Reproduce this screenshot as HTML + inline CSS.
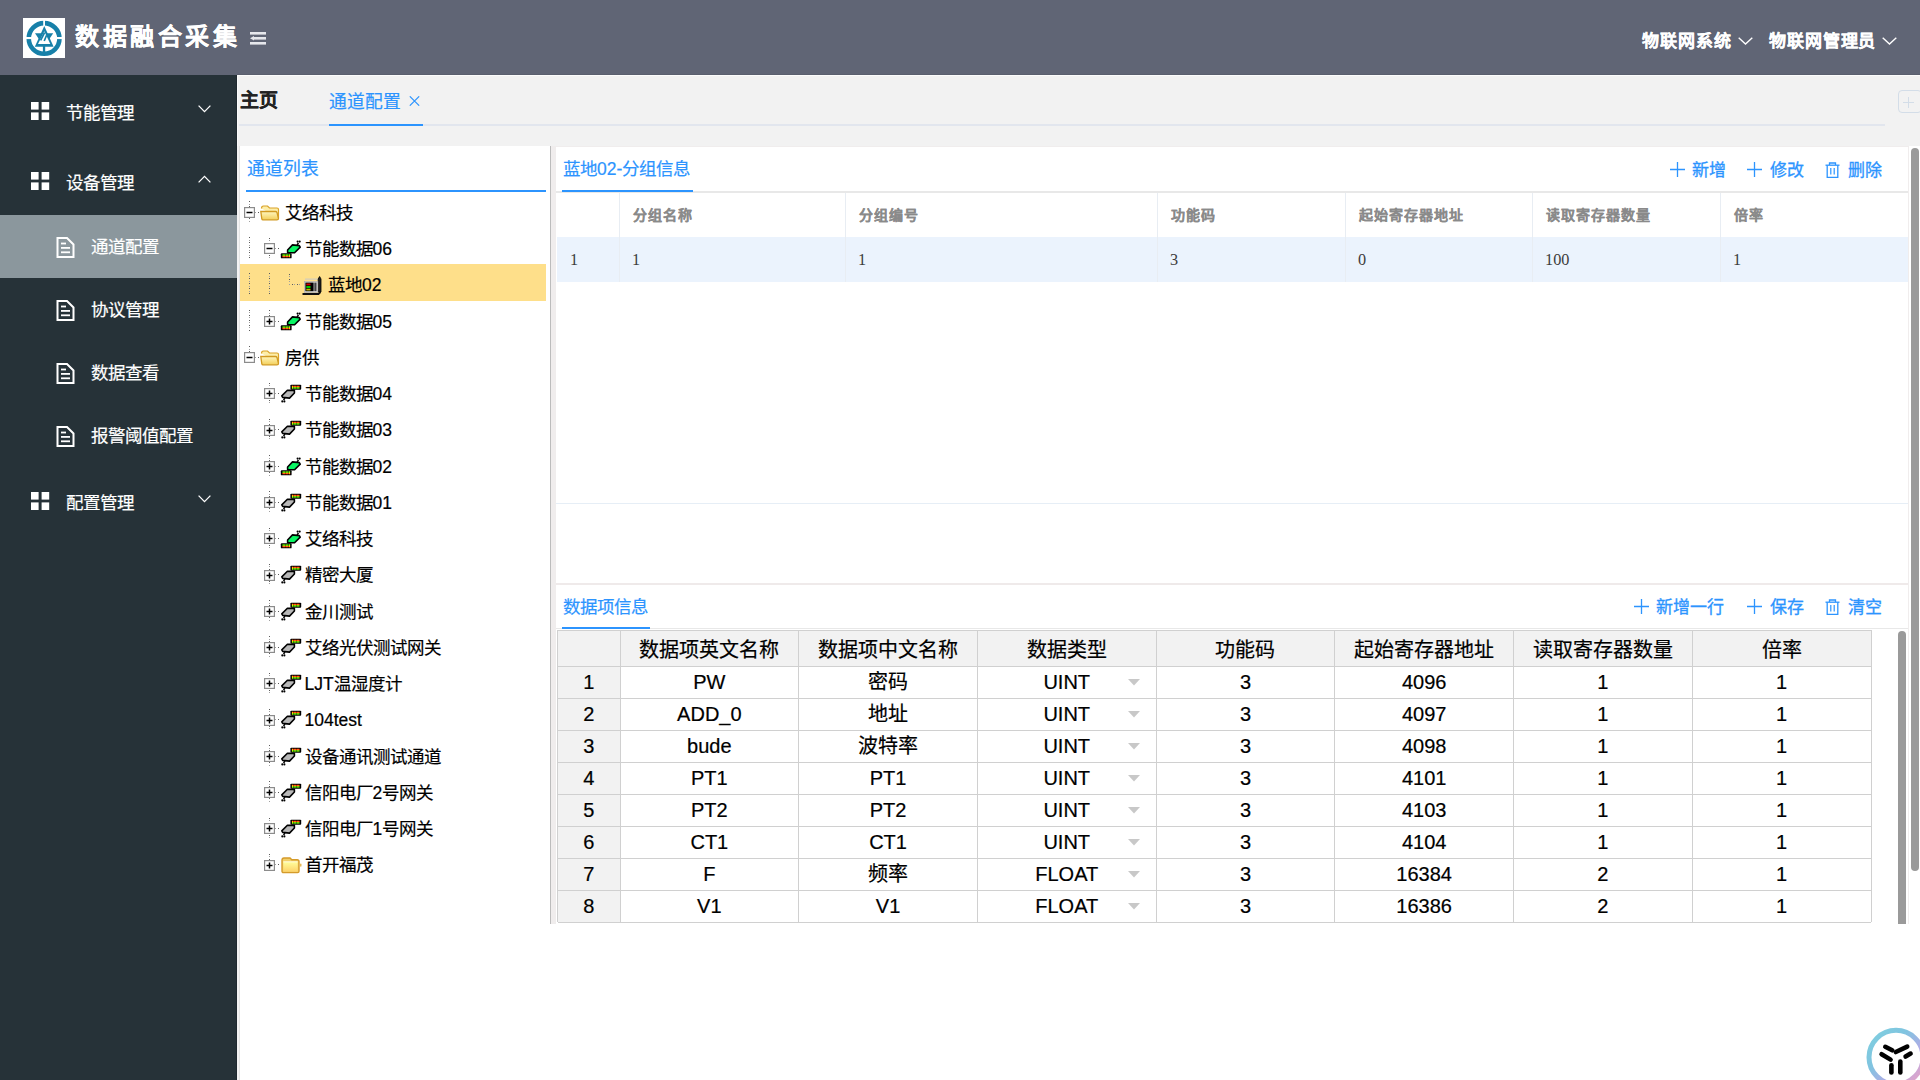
<!DOCTYPE html>
<html lang="zh-CN">
<head>
<meta charset="utf-8">
<style>
*{box-sizing:border-box;margin:0;padding:0}
html,body{width:1920px;height:1080px;overflow:hidden;background:#fff;font-family:"Liberation Sans",sans-serif;-webkit-text-stroke:0.2px;}
.abs{position:absolute}
#hdr{position:absolute;left:0;top:0;width:1920px;height:75px;background:#606575}
#logo{position:absolute;left:23px;top:18px;width:42px;height:40px;background:#fff}
#title{position:absolute;left:75px;top:18px;font-size:24px;letter-spacing:3.6px;line-height:38px;font-weight:bold;color:#fff;white-space:nowrap}
.hr-item{position:absolute;top:27.5px;font-size:17px;letter-spacing:0.9px;line-height:28px;font-weight:bold;color:#fff;white-space:nowrap}
#side{position:absolute;left:0;top:75px;width:237px;height:1005px;background:#263238}
.mi{position:absolute;left:0;width:237px;height:70px}
.mi .t{position:absolute;left:66px;top:24px;font-size:17.5px;line-height:28px;color:#fff;white-space:nowrap}
.mi svg{position:absolute}
.si{position:absolute;left:0;width:237px;height:63px}
.si .t{position:absolute;left:91px;top:18px;font-size:17.5px;line-height:28px;color:#fff;white-space:nowrap}
.si svg{position:absolute;left:56px;top:22px}
#main{position:absolute;left:237px;top:75px;width:1683px;height:1005px;background:#fff}
#tabbar{position:absolute;left:0;top:0;width:1683px;height:71px;background:#f2f2f2}
#content-bg{position:absolute;left:0;top:71px;width:1683px;height:860px;background:#f2f2f2}
.blue{color:#2a8cf5}
.ttl{position:absolute;font-size:18px;line-height:28px;color:#2a8cf5;white-space:nowrap}
.uline{position:absolute;height:2px;background:#2a8cf5}
.gline{position:absolute;height:1px;background:#e6e6e6}
.tree-row{position:absolute;left:0;height:36.25px;width:306px}
.tree-row .t{position:absolute;top:4px;font-size:18px;line-height:28px;color:#000;white-space:nowrap}
.tree-row svg{position:absolute}
.vd{width:1px;background:repeating-linear-gradient(to bottom,#8c8c8c 0,#8c8c8c 1.25px,transparent 1.25px,transparent 2.5px)}
.hd{height:1px;background:repeating-linear-gradient(to right,#8c8c8c 0,#8c8c8c 1.25px,transparent 1.25px,transparent 2.5px)}
.tt{font-size:17.5px;line-height:28px;color:#000;white-space:nowrap}
</style>
</head>
<body>
<div id="hdr">
  <div id="logo">
    <svg width="42" height="40" viewBox="0 0 42 40">
      <circle cx="21.1" cy="20.45" r="15.35" fill="none" stroke="#1780a9" stroke-width="4.6"/>
      <rect x="20.2" y="1" width="1.8" height="7.5" fill="#fff"/>
      <rect x="2" y="19" width="7" height="2.1" fill="#fff"/>
      <rect x="33" y="19" width="7" height="2.1" fill="#fff"/>
      <rect x="19.9" y="27" width="2.3" height="8" fill="#1780a9"/>
      <path d="M21.3 8.1 L30.6 28.8 L11.8 28.8 Z" fill="#1780a9"/>
      <path d="M12 15.2 L30.2 15.2 L21.1 28.7 Z" fill="#1780a9"/>
      <path d="M21.3 13.2 L27.3 25.9 L15 25.9 Z" fill="#fff"/>
      <path d="M21.6 14.5 L17.6 22.4" stroke="#1780a9" stroke-width="1.7"/>
      <path d="M23.6 17.2 L21.2 23" stroke="#1780a9" stroke-width="1.7"/>
      
    </svg>
  </div>
  <div id="title">数据融合采集</div>
  <svg class="abs" style="left:250px;top:32px" width="16" height="13" viewBox="0 0 16 13">
    <rect x="0" y="0" width="16" height="2.6" fill="#e6e7ec"/>
    <rect x="4" y="5" width="12" height="2.6" fill="#e6e7ec"/>
    <path d="M0 6.3 L4 4 L4 8.6 Z" fill="#e6e7ec"/>
    <rect x="0" y="10" width="16" height="2.6" fill="#e6e7ec"/>
  </svg>
  <div class="hr-item" style="left:1642px">物联网系统</div>
  <svg class="abs" style="left:1738px;top:37px" width="15" height="8" viewBox="0 0 15 8"><path d="M0.7 0.7 L7.5 7 L14.3 0.7" fill="none" stroke="#fff" stroke-width="1.4"/></svg>
  <div class="hr-item" style="left:1769px">物联网管理员</div>
  <svg class="abs" style="left:1882px;top:37px" width="15" height="8" viewBox="0 0 15 8"><path d="M0.7 0.7 L7.5 7 L14.3 0.7" fill="none" stroke="#fff" stroke-width="1.4"/></svg>
</div>

<div id="side">
  <div class="mi" style="top:0">
    <svg style="left:31px;top:27px" width="19" height="19" viewBox="0 0 19 19"><rect x="0" y="0" width="7.6" height="7.6" fill="#fff"/><rect x="10.6" y="0" width="7.6" height="7.6" fill="#fff"/><rect x="0" y="10.4" width="7.6" height="7.6" fill="#fff"/><rect x="10.6" y="10.4" width="7.6" height="7.6" fill="#fff"/></svg>
    <div class="t">节能管理</div>
    <svg style="left:198px;top:30px" width="13" height="8" viewBox="0 0 13 8"><path d="M0.6 0.6 L6.5 6.6 L12.4 0.6" fill="none" stroke="#fff" stroke-width="1.3"/></svg>
  </div>
  <div class="mi" style="top:70px">
    <svg style="left:31px;top:27px" width="19" height="19" viewBox="0 0 19 19"><rect x="0" y="0" width="7.6" height="7.6" fill="#fff"/><rect x="10.6" y="0" width="7.6" height="7.6" fill="#fff"/><rect x="0" y="10.4" width="7.6" height="7.6" fill="#fff"/><rect x="10.6" y="10.4" width="7.6" height="7.6" fill="#fff"/></svg>
    <div class="t">设备管理</div>
    <svg style="left:198px;top:30px" width="13" height="8" viewBox="0 0 13 8"><path d="M0.6 7.4 L6.5 1.4 L12.4 7.4" fill="none" stroke="#fff" stroke-width="1.3"/></svg>
  </div>
  <div class="si" style="top:140px;background:#8b979d">
    <svg width="19" height="21" viewBox="0 0 19 21"><path d="M1.5 1 L11 1 L17.5 7.5 L17.5 20 L1.5 20 Z" fill="none" stroke="#fff" stroke-width="2"/><rect x="5" y="5.6" width="5" height="1.8" fill="#fff"/><rect x="5" y="10" width="9" height="1.8" fill="#fff"/><rect x="5" y="14.4" width="9" height="1.8" fill="#fff"/></svg>
    <div class="t">通道配置</div>
  </div>
  <div class="si" style="top:203px">
    <svg width="19" height="21" viewBox="0 0 19 21"><path d="M1.5 1 L11 1 L17.5 7.5 L17.5 20 L1.5 20 Z" fill="none" stroke="#fff" stroke-width="2"/><rect x="5" y="5.6" width="5" height="1.8" fill="#fff"/><rect x="5" y="10" width="9" height="1.8" fill="#fff"/><rect x="5" y="14.4" width="9" height="1.8" fill="#fff"/></svg>
    <div class="t">协议管理</div>
  </div>
  <div class="si" style="top:266px">
    <svg width="19" height="21" viewBox="0 0 19 21"><path d="M1.5 1 L11 1 L17.5 7.5 L17.5 20 L1.5 20 Z" fill="none" stroke="#fff" stroke-width="2"/><rect x="5" y="5.6" width="5" height="1.8" fill="#fff"/><rect x="5" y="10" width="9" height="1.8" fill="#fff"/><rect x="5" y="14.4" width="9" height="1.8" fill="#fff"/></svg>
    <div class="t">数据查看</div>
  </div>
  <div class="si" style="top:329px">
    <svg width="19" height="21" viewBox="0 0 19 21"><path d="M1.5 1 L11 1 L17.5 7.5 L17.5 20 L1.5 20 Z" fill="none" stroke="#fff" stroke-width="2"/><rect x="5" y="5.6" width="5" height="1.8" fill="#fff"/><rect x="5" y="10" width="9" height="1.8" fill="#fff"/><rect x="5" y="14.4" width="9" height="1.8" fill="#fff"/></svg>
    <div class="t">报警阈值配置</div>
  </div>
  <div class="mi" style="top:390px">
    <svg style="left:31px;top:27px" width="19" height="19" viewBox="0 0 19 19"><rect x="0" y="0" width="7.6" height="7.6" fill="#fff"/><rect x="10.6" y="0" width="7.6" height="7.6" fill="#fff"/><rect x="0" y="10.4" width="7.6" height="7.6" fill="#fff"/><rect x="10.6" y="10.4" width="7.6" height="7.6" fill="#fff"/></svg>
    <div class="t">配置管理</div>
    <svg style="left:198px;top:30px" width="13" height="8" viewBox="0 0 13 8"><path d="M0.6 0.6 L6.5 6.6 L12.4 0.6" fill="none" stroke="#fff" stroke-width="1.3"/></svg>
  </div>
</div>


<!-- main area -->
<div class="abs" style="left:237px;top:75px;width:1683px;height:1005px;background:#fff"></div>
<div class="abs" style="left:237px;top:75px;width:1683px;height:71px;background:#f2f2f2"></div>
<div class="abs" style="left:237px;top:74px;width:1683px;height:1px;background:#5a5f6e"></div>
<div class="abs" style="left:237px;top:75px;width:1683px;height:1px;background:#fcfcfc"></div>
<div class="abs" style="left:237px;top:75px;width:1px;height:71px;background:#fafafa"></div>
<div class="abs" style="left:236px;top:75px;width:1px;height:140px;background:#1f2930"></div>
<div class="abs" style="left:236px;top:278px;width:1px;height:802px;background:#1f2930"></div>
<div class="abs" style="left:237px;top:146px;width:3px;height:934px;background:#f3f3f3"></div>
<div class="abs" style="left:239px;top:146px;width:1px;height:934px;background:#e4e4e4"></div>
<!-- tabs -->
<div class="abs" style="left:239.5px;top:87px;font-size:19px;line-height:28px;font-weight:bold;color:#222;white-space:nowrap">主页</div>
<div class="abs" style="left:329px;top:88px;font-size:17.75px;line-height:28px;color:#2c94fe;white-space:nowrap">通道配置</div>
<svg class="abs" style="left:409px;top:96px" width="11" height="10" viewBox="0 0 11 10"><path d="M0.8 0.3 L10.2 9.7 M10.2 0.3 L0.8 9.7" stroke="#2c94fe" stroke-width="1.1"/></svg>
<div class="abs" style="left:239px;top:124px;width:1646px;height:2px;background:#e2e6ee"></div>
<div class="abs" style="left:329px;top:124px;width:94px;height:2px;background:#2c94fe"></div>
<div class="abs" style="left:1898px;top:90px;width:24px;height:23px;border:1px solid #d3dde8;border-radius:4px"></div>
<svg class="abs" style="left:1903px;top:97px" width="11" height="11" viewBox="0 0 11 11"><path d="M5.5 0 V11 M0 5.5 H11" stroke="#d3dde8" stroke-width="1"/></svg>

<!-- left tree panel -->
<div class="abs" style="left:240px;top:146px;width:310px;height:778px;background:#fff"></div>
<div class="abs" style="left:246.5px;top:155px;font-size:17.75px;line-height:28px;color:#2c94fe;white-space:nowrap">通道列表</div>
<div class="abs" style="left:246px;top:190px;width:300px;height:2px;background:#2c94fe"></div>
<!-- splitter -->
<div class="abs" style="left:550px;top:146px;width:1px;height:778px;background:#bcbcbc"></div>
<div class="abs" style="left:551px;top:146px;width:5px;height:778px;background:#f0eded"></div>
<!-- right panel -->
<div class="abs" style="left:556px;top:146px;width:1353px;height:778px;background:#f0eded"></div>
<div class="abs" style="left:556px;top:147px;width:1352px;height:777px;background:#fff"></div>
<div class="abs" style="left:556px;top:583px;width:1352px;height:2px;background:#efeaea"></div>
<!-- outer scrollbar -->
<div class="abs" style="left:1911px;top:148px;width:8px;height:723px;background:#9a9a9a;border-radius:4px 4px 4px 4px"></div>

<!-- upper section -->
<div class="abs" style="left:563px;top:155px;font-size:17.5px;line-height:28px;color:#2c94fe;white-space:nowrap">蓝地02-分组信息</div>
<div class="abs" style="left:556px;top:191px;width:1352px;height:2px;background:#e8e8e8"></div>
<div class="abs" style="left:562px;top:190px;width:131px;height:2px;background:#2c94fe"></div>
<div class="abs" style="left:249px;top:201px;width:1px;height:1px;background:#5a5a5a"></div><div class="abs" style="left:249px;top:204px;width:1px;height:1px;background:#a0a0a0"></div><div class="abs" style="left:249px;top:206px;width:1px;height:1px;background:#5a5a5a"></div>
<div class="abs" style="left:249px;top:218px;width:1px;height:1px;background:#5a5a5a"></div><div class="abs" style="left:249px;top:221px;width:1px;height:1px;background:#a0a0a0"></div>
<div class="abs" style="left:255px;top:212px;width:1px;height:1px;background:#a0a0a0"></div><div class="abs" style="left:258px;top:212px;width:1px;height:1px;background:#5a5a5a"></div>
<svg class="abs" style="left:244.0px;top:207.0px" width="11" height="11" viewBox="0 0 11 11"><rect x="0.6" y="0.6" width="9.8" height="9.8" fill="#fff" stroke="#8c8c8c" stroke-width="1.2"/><path d="M2.5 5.5 H8.5" stroke="#000" stroke-width="1.5"/></svg>
<svg class="abs" style="left:260px;top:204.85px" width="20" height="16" viewBox="0 0 20 16">
<defs><linearGradient id="fg0" x1="0" y1="0" x2="0" y2="1"><stop offset="0" stop-color="#fff7c0"/><stop offset="1" stop-color="#f3cf5a"/></linearGradient></defs>
<path d="M1.5 3.5 Q1.5 1 3.5 1 L7.5 1 L9.5 3 L17 3 Q18.5 3 18.5 4.5 L18.5 13" fill="#fdeeaa" stroke="#d9a227" stroke-width="1.2"/>
<path d="M0.8 6.5 L15.5 6.5 Q16.5 6.5 17 7.5 L18.5 13.5 Q18.5 14.8 17 14.8 L3 14.8 Q2 14.8 1.8 13.8 Z" fill="url(#fg0)" stroke="#d19a22" stroke-width="1.3"/>
</svg>
<div class="abs tt" style="left:284.5px;top:198.85px">艾络科技</div>
<div class="abs" style="left:249px;top:237px;width:1px;height:1px;background:#5a5a5a"></div><div class="abs" style="left:249px;top:240px;width:1px;height:1px;background:#a0a0a0"></div><div class="abs" style="left:249px;top:242px;width:1px;height:1px;background:#5a5a5a"></div><div class="abs" style="left:249px;top:245px;width:1px;height:1px;background:#a0a0a0"></div><div class="abs" style="left:249px;top:247px;width:1px;height:1px;background:#5a5a5a"></div><div class="abs" style="left:249px;top:250px;width:1px;height:1px;background:#a0a0a0"></div><div class="abs" style="left:249px;top:252px;width:1px;height:1px;background:#5a5a5a"></div><div class="abs" style="left:249px;top:255px;width:1px;height:1px;background:#a0a0a0"></div><div class="abs" style="left:249px;top:257px;width:1px;height:1px;background:#5a5a5a"></div>
<div class="abs" style="left:269px;top:238px;width:1px;height:1px;background:#5a5a5a"></div><div class="abs" style="left:269px;top:240px;width:1px;height:1px;background:#a0a0a0"></div><div class="abs" style="left:269px;top:243px;width:1px;height:1px;background:#5a5a5a"></div>
<div class="abs" style="left:269px;top:255px;width:1px;height:1px;background:#5a5a5a"></div><div class="abs" style="left:269px;top:257px;width:1px;height:1px;background:#a0a0a0"></div>
<div class="abs" style="left:275px;top:248px;width:1px;height:1px;background:#a0a0a0"></div><div class="abs" style="left:278px;top:248px;width:1px;height:1px;background:#5a5a5a"></div>
<svg class="abs" style="left:264.0px;top:243.0px" width="11" height="11" viewBox="0 0 11 11"><rect x="0.6" y="0.6" width="9.8" height="9.8" fill="#fff" stroke="#8c8c8c" stroke-width="1.2"/><path d="M2.5 5.5 H8.5" stroke="#000" stroke-width="1.5"/></svg>
<svg class="abs" style="left:277.8px;top:235.5px" width="26" height="26" viewBox="0 0 26 26">
<path d="M9.6 16.6 L9.6 14 L14.5 8.9 L21.3 9.6 L22.2 11.1 L16.6 16.8 Z" fill="#0af564" stroke="#000" stroke-width="1.6" stroke-linejoin="round"/>
<path d="M19 9 L20.5 7" stroke="#000" stroke-width="1.4"/>
<circle cx="19.6" cy="5.6" r="1.05" fill="#000"/><circle cx="21.7" cy="5.6" r="1.05" fill="#000"/>
<rect x="2.8" y="17.3" width="10.8" height="5" rx="0.9" fill="#000"/>
<rect x="4.2" y="18.4" width="8" height="1.5" fill="#22cc00"/>
<rect x="4.2" y="19.9" width="8" height="1.3" fill="#ee1111"/>
<rect x="5.6" y="18.4" width="0.8" height="2.8" fill="#ff0"/><rect x="8.6" y="18.4" width="0.8" height="2.8" fill="#ff0"/><rect x="11" y="18.4" width="0.8" height="2.8" fill="#ff0"/>
</svg>
<div class="abs tt" style="left:304.5px;top:235.10px">节能数据06</div>
<div class="abs" style="left:240px;top:264px;width:306px;height:36.5px;background:#fedf8a"></div>
<div class="abs" style="left:249px;top:273px;width:1px;height:1px;background:#5a5a5a"></div><div class="abs" style="left:249px;top:276px;width:1px;height:1px;background:#a0a0a0"></div><div class="abs" style="left:249px;top:278px;width:1px;height:1px;background:#5a5a5a"></div><div class="abs" style="left:249px;top:281px;width:1px;height:1px;background:#a0a0a0"></div><div class="abs" style="left:249px;top:283px;width:1px;height:1px;background:#5a5a5a"></div><div class="abs" style="left:249px;top:286px;width:1px;height:1px;background:#a0a0a0"></div><div class="abs" style="left:249px;top:288px;width:1px;height:1px;background:#5a5a5a"></div><div class="abs" style="left:249px;top:291px;width:1px;height:1px;background:#a0a0a0"></div><div class="abs" style="left:249px;top:293px;width:1px;height:1px;background:#5a5a5a"></div>
<div class="abs" style="left:269px;top:273px;width:1px;height:1px;background:#5a5a5a"></div><div class="abs" style="left:269px;top:276px;width:1px;height:1px;background:#a0a0a0"></div><div class="abs" style="left:269px;top:278px;width:1px;height:1px;background:#5a5a5a"></div><div class="abs" style="left:269px;top:281px;width:1px;height:1px;background:#a0a0a0"></div><div class="abs" style="left:269px;top:283px;width:1px;height:1px;background:#5a5a5a"></div><div class="abs" style="left:269px;top:286px;width:1px;height:1px;background:#a0a0a0"></div><div class="abs" style="left:269px;top:288px;width:1px;height:1px;background:#5a5a5a"></div><div class="abs" style="left:269px;top:291px;width:1px;height:1px;background:#a0a0a0"></div><div class="abs" style="left:269px;top:293px;width:1px;height:1px;background:#5a5a5a"></div>
<div class="abs" style="left:289px;top:274px;width:1px;height:1px;background:#5a5a5a"></div><div class="abs" style="left:289px;top:276px;width:1px;height:1px;background:#a0a0a0"></div><div class="abs" style="left:289px;top:279px;width:1px;height:1px;background:#5a5a5a"></div><div class="abs" style="left:289px;top:281px;width:1px;height:1px;background:#a0a0a0"></div><div class="abs" style="left:289px;top:284px;width:1px;height:1px;background:#5a5a5a"></div>
<div class="abs" style="left:289px;top:284px;width:1px;height:1px;background:#a0a0a0"></div><div class="abs" style="left:292px;top:284px;width:1px;height:1px;background:#5a5a5a"></div><div class="abs" style="left:294px;top:284px;width:1px;height:1px;background:#a0a0a0"></div><div class="abs" style="left:297px;top:284px;width:1px;height:1px;background:#5a5a5a"></div><div class="abs" style="left:299px;top:284px;width:1px;height:1px;background:#a0a0a0"></div>
<svg class="abs" style="left:301px;top:275.35px" width="22" height="22" viewBox="0 0 22 22">
<rect x="4" y="3.6" width="13" height="1" fill="#c8c8c8"/>
<path d="M17.2 17 L17.2 4 L18.6 1.5 L20 4 L20 17 Z" fill="#222" stroke="#000" stroke-width="0.8"/>
<rect x="3.4" y="6.5" width="13.4" height="11" fill="#d8d8d8" stroke="#aaa" stroke-width="0.6"/>
<rect x="4.4" y="7.6" width="8.2" height="8.6" fill="#000"/>
<rect x="5.3" y="8.5" width="4.2" height="1.8" fill="#d00000"/>
<rect x="5.3" y="11.1" width="4.2" height="1.8" fill="#00e000"/>
<rect x="5.3" y="13.7" width="4.2" height="1.8" fill="#c8b400"/>
<rect x="13.3" y="7.6" width="2.2" height="8.6" fill="#444"/>
<path d="M1.5 19 L17.5 19 L19.5 17" fill="none" stroke="#111" stroke-width="1.8"/>
</svg>
<div class="abs tt" style="left:328px;top:271.35px">蓝地02</div>
<div class="abs" style="left:249px;top:310px;width:1px;height:1px;background:#5a5a5a"></div><div class="abs" style="left:249px;top:312px;width:1px;height:1px;background:#a0a0a0"></div><div class="abs" style="left:249px;top:315px;width:1px;height:1px;background:#5a5a5a"></div><div class="abs" style="left:249px;top:317px;width:1px;height:1px;background:#a0a0a0"></div><div class="abs" style="left:249px;top:320px;width:1px;height:1px;background:#5a5a5a"></div><div class="abs" style="left:249px;top:322px;width:1px;height:1px;background:#a0a0a0"></div><div class="abs" style="left:249px;top:325px;width:1px;height:1px;background:#5a5a5a"></div><div class="abs" style="left:249px;top:327px;width:1px;height:1px;background:#a0a0a0"></div><div class="abs" style="left:249px;top:330px;width:1px;height:1px;background:#5a5a5a"></div>
<div class="abs" style="left:269px;top:310px;width:1px;height:1px;background:#5a5a5a"></div><div class="abs" style="left:269px;top:313px;width:1px;height:1px;background:#a0a0a0"></div><div class="abs" style="left:269px;top:315px;width:1px;height:1px;background:#5a5a5a"></div>
<div class="abs" style="left:275px;top:321px;width:1px;height:1px;background:#a0a0a0"></div><div class="abs" style="left:278px;top:321px;width:1px;height:1px;background:#5a5a5a"></div>
<svg class="abs" style="left:264.0px;top:315.5px" width="11" height="11" viewBox="0 0 11 11"><rect x="0.6" y="0.6" width="9.8" height="9.8" fill="#fff" stroke="#8c8c8c" stroke-width="1.2"/><path d="M2.5 5.5 H8.5" stroke="#000" stroke-width="1.5"/><path d="M5.5 2.5 V8.5" stroke="#000" stroke-width="1.5"/></svg>
<svg class="abs" style="left:277.8px;top:308.0px" width="26" height="26" viewBox="0 0 26 26">
<path d="M9.6 16.6 L9.6 14 L14.5 8.9 L21.3 9.6 L22.2 11.1 L16.6 16.8 Z" fill="#0af564" stroke="#000" stroke-width="1.6" stroke-linejoin="round"/>
<path d="M19 9 L20.5 7" stroke="#000" stroke-width="1.4"/>
<circle cx="19.6" cy="5.6" r="1.05" fill="#000"/><circle cx="21.7" cy="5.6" r="1.05" fill="#000"/>
<rect x="2.8" y="17.3" width="10.8" height="5" rx="0.9" fill="#000"/>
<rect x="4.2" y="18.4" width="8" height="1.5" fill="#22cc00"/>
<rect x="4.2" y="19.9" width="8" height="1.3" fill="#ee1111"/>
<rect x="5.6" y="18.4" width="0.8" height="2.8" fill="#ff0"/><rect x="8.6" y="18.4" width="0.8" height="2.8" fill="#ff0"/><rect x="11" y="18.4" width="0.8" height="2.8" fill="#ff0"/>
</svg>
<div class="abs tt" style="left:304.5px;top:307.60px">节能数据05</div>
<div class="abs" style="left:249px;top:346px;width:1px;height:1px;background:#5a5a5a"></div><div class="abs" style="left:249px;top:349px;width:1px;height:1px;background:#a0a0a0"></div><div class="abs" style="left:249px;top:351px;width:1px;height:1px;background:#5a5a5a"></div>
<div class="abs" style="left:255px;top:357px;width:1px;height:1px;background:#a0a0a0"></div><div class="abs" style="left:258px;top:357px;width:1px;height:1px;background:#5a5a5a"></div>
<svg class="abs" style="left:244.0px;top:352.0px" width="11" height="11" viewBox="0 0 11 11"><rect x="0.6" y="0.6" width="9.8" height="9.8" fill="#fff" stroke="#8c8c8c" stroke-width="1.2"/><path d="M2.5 5.5 H8.5" stroke="#000" stroke-width="1.5"/></svg>
<svg class="abs" style="left:260px;top:349.85px" width="20" height="16" viewBox="0 0 20 16">
<defs><linearGradient id="fg4" x1="0" y1="0" x2="0" y2="1"><stop offset="0" stop-color="#fff7c0"/><stop offset="1" stop-color="#f3cf5a"/></linearGradient></defs>
<path d="M1.5 3.5 Q1.5 1 3.5 1 L7.5 1 L9.5 3 L17 3 Q18.5 3 18.5 4.5 L18.5 13" fill="#fdeeaa" stroke="#d9a227" stroke-width="1.2"/>
<path d="M0.8 6.5 L15.5 6.5 Q16.5 6.5 17 7.5 L18.5 13.5 Q18.5 14.8 17 14.8 L3 14.8 Q2 14.8 1.8 13.8 Z" fill="url(#fg4)" stroke="#d19a22" stroke-width="1.3"/>
</svg>
<div class="abs tt" style="left:284.5px;top:343.85px">房供</div>
<div class="abs" style="left:269px;top:383px;width:1px;height:1px;background:#5a5a5a"></div><div class="abs" style="left:269px;top:385px;width:1px;height:1px;background:#a0a0a0"></div><div class="abs" style="left:269px;top:388px;width:1px;height:1px;background:#5a5a5a"></div>
<div class="abs" style="left:269px;top:400px;width:1px;height:1px;background:#5a5a5a"></div><div class="abs" style="left:269px;top:402px;width:1px;height:1px;background:#a0a0a0"></div>
<div class="abs" style="left:275px;top:393px;width:1px;height:1px;background:#a0a0a0"></div><div class="abs" style="left:278px;top:393px;width:1px;height:1px;background:#5a5a5a"></div>
<svg class="abs" style="left:264.0px;top:388.0px" width="11" height="11" viewBox="0 0 11 11"><rect x="0.6" y="0.6" width="9.8" height="9.8" fill="#fff" stroke="#8c8c8c" stroke-width="1.2"/><path d="M2.5 5.5 H8.5" stroke="#000" stroke-width="1.5"/><path d="M5.5 2.5 V8.5" stroke="#000" stroke-width="1.5"/></svg>
<svg class="abs" style="left:277.8px;top:381.0px;transform:rotate(180deg)" width="26" height="26" viewBox="0 0 26 26">
<path d="M9.6 16.6 L9.6 14 L14.5 8.9 L21.3 9.6 L22.2 11.1 L16.6 16.8 Z" fill="#b8b8b8" stroke="#000" stroke-width="1.6" stroke-linejoin="round"/>
<path d="M19 9 L20.5 7" stroke="#000" stroke-width="1.4"/>
<circle cx="19.6" cy="5.6" r="1.05" fill="#000"/><circle cx="21.7" cy="5.6" r="1.05" fill="#000"/>
<rect x="2.8" y="17.3" width="10.8" height="5" rx="0.9" fill="#000"/>
<rect x="4.2" y="18.4" width="8" height="1.5" fill="#22cc00"/>
<rect x="4.2" y="19.9" width="8" height="1.3" fill="#ee1111"/>
<rect x="5.6" y="18.4" width="0.8" height="2.8" fill="#ff0"/><rect x="8.6" y="18.4" width="0.8" height="2.8" fill="#ff0"/><rect x="11" y="18.4" width="0.8" height="2.8" fill="#ff0"/>
</svg>
<div class="abs tt" style="left:304.5px;top:380.10px">节能数据04</div>
<div class="abs" style="left:269px;top:419px;width:1px;height:1px;background:#5a5a5a"></div><div class="abs" style="left:269px;top:421px;width:1px;height:1px;background:#a0a0a0"></div><div class="abs" style="left:269px;top:424px;width:1px;height:1px;background:#5a5a5a"></div>
<div class="abs" style="left:269px;top:436px;width:1px;height:1px;background:#5a5a5a"></div><div class="abs" style="left:269px;top:438px;width:1px;height:1px;background:#a0a0a0"></div>
<div class="abs" style="left:275px;top:429px;width:1px;height:1px;background:#a0a0a0"></div><div class="abs" style="left:278px;top:429px;width:1px;height:1px;background:#5a5a5a"></div>
<svg class="abs" style="left:264.0px;top:424.5px" width="11" height="11" viewBox="0 0 11 11"><rect x="0.6" y="0.6" width="9.8" height="9.8" fill="#fff" stroke="#8c8c8c" stroke-width="1.2"/><path d="M2.5 5.5 H8.5" stroke="#000" stroke-width="1.5"/><path d="M5.5 2.5 V8.5" stroke="#000" stroke-width="1.5"/></svg>
<svg class="abs" style="left:277.8px;top:417.25px;transform:rotate(180deg)" width="26" height="26" viewBox="0 0 26 26">
<path d="M9.6 16.6 L9.6 14 L14.5 8.9 L21.3 9.6 L22.2 11.1 L16.6 16.8 Z" fill="#b8b8b8" stroke="#000" stroke-width="1.6" stroke-linejoin="round"/>
<path d="M19 9 L20.5 7" stroke="#000" stroke-width="1.4"/>
<circle cx="19.6" cy="5.6" r="1.05" fill="#000"/><circle cx="21.7" cy="5.6" r="1.05" fill="#000"/>
<rect x="2.8" y="17.3" width="10.8" height="5" rx="0.9" fill="#000"/>
<rect x="4.2" y="18.4" width="8" height="1.5" fill="#22cc00"/>
<rect x="4.2" y="19.9" width="8" height="1.3" fill="#ee1111"/>
<rect x="5.6" y="18.4" width="0.8" height="2.8" fill="#ff0"/><rect x="8.6" y="18.4" width="0.8" height="2.8" fill="#ff0"/><rect x="11" y="18.4" width="0.8" height="2.8" fill="#ff0"/>
</svg>
<div class="abs tt" style="left:304.5px;top:416.35px">节能数据03</div>
<div class="abs" style="left:269px;top:455px;width:1px;height:1px;background:#5a5a5a"></div><div class="abs" style="left:269px;top:458px;width:1px;height:1px;background:#a0a0a0"></div><div class="abs" style="left:269px;top:460px;width:1px;height:1px;background:#5a5a5a"></div>
<div class="abs" style="left:269px;top:472px;width:1px;height:1px;background:#5a5a5a"></div><div class="abs" style="left:269px;top:475px;width:1px;height:1px;background:#a0a0a0"></div>
<div class="abs" style="left:275px;top:466px;width:1px;height:1px;background:#a0a0a0"></div><div class="abs" style="left:278px;top:466px;width:1px;height:1px;background:#5a5a5a"></div>
<svg class="abs" style="left:264.0px;top:460.5px" width="11" height="11" viewBox="0 0 11 11"><rect x="0.6" y="0.6" width="9.8" height="9.8" fill="#fff" stroke="#8c8c8c" stroke-width="1.2"/><path d="M2.5 5.5 H8.5" stroke="#000" stroke-width="1.5"/><path d="M5.5 2.5 V8.5" stroke="#000" stroke-width="1.5"/></svg>
<svg class="abs" style="left:277.8px;top:453.0px" width="26" height="26" viewBox="0 0 26 26">
<path d="M9.6 16.6 L9.6 14 L14.5 8.9 L21.3 9.6 L22.2 11.1 L16.6 16.8 Z" fill="#0af564" stroke="#000" stroke-width="1.6" stroke-linejoin="round"/>
<path d="M19 9 L20.5 7" stroke="#000" stroke-width="1.4"/>
<circle cx="19.6" cy="5.6" r="1.05" fill="#000"/><circle cx="21.7" cy="5.6" r="1.05" fill="#000"/>
<rect x="2.8" y="17.3" width="10.8" height="5" rx="0.9" fill="#000"/>
<rect x="4.2" y="18.4" width="8" height="1.5" fill="#22cc00"/>
<rect x="4.2" y="19.9" width="8" height="1.3" fill="#ee1111"/>
<rect x="5.6" y="18.4" width="0.8" height="2.8" fill="#ff0"/><rect x="8.6" y="18.4" width="0.8" height="2.8" fill="#ff0"/><rect x="11" y="18.4" width="0.8" height="2.8" fill="#ff0"/>
</svg>
<div class="abs tt" style="left:304.5px;top:452.60px">节能数据02</div>
<div class="abs" style="left:269px;top:491px;width:1px;height:1px;background:#5a5a5a"></div><div class="abs" style="left:269px;top:494px;width:1px;height:1px;background:#a0a0a0"></div><div class="abs" style="left:269px;top:496px;width:1px;height:1px;background:#5a5a5a"></div>
<div class="abs" style="left:269px;top:508px;width:1px;height:1px;background:#5a5a5a"></div><div class="abs" style="left:269px;top:511px;width:1px;height:1px;background:#a0a0a0"></div>
<div class="abs" style="left:275px;top:502px;width:1px;height:1px;background:#a0a0a0"></div><div class="abs" style="left:278px;top:502px;width:1px;height:1px;background:#5a5a5a"></div>
<svg class="abs" style="left:264.0px;top:497.0px" width="11" height="11" viewBox="0 0 11 11"><rect x="0.6" y="0.6" width="9.8" height="9.8" fill="#fff" stroke="#8c8c8c" stroke-width="1.2"/><path d="M2.5 5.5 H8.5" stroke="#000" stroke-width="1.5"/><path d="M5.5 2.5 V8.5" stroke="#000" stroke-width="1.5"/></svg>
<svg class="abs" style="left:277.8px;top:489.75px;transform:rotate(180deg)" width="26" height="26" viewBox="0 0 26 26">
<path d="M9.6 16.6 L9.6 14 L14.5 8.9 L21.3 9.6 L22.2 11.1 L16.6 16.8 Z" fill="#b8b8b8" stroke="#000" stroke-width="1.6" stroke-linejoin="round"/>
<path d="M19 9 L20.5 7" stroke="#000" stroke-width="1.4"/>
<circle cx="19.6" cy="5.6" r="1.05" fill="#000"/><circle cx="21.7" cy="5.6" r="1.05" fill="#000"/>
<rect x="2.8" y="17.3" width="10.8" height="5" rx="0.9" fill="#000"/>
<rect x="4.2" y="18.4" width="8" height="1.5" fill="#22cc00"/>
<rect x="4.2" y="19.9" width="8" height="1.3" fill="#ee1111"/>
<rect x="5.6" y="18.4" width="0.8" height="2.8" fill="#ff0"/><rect x="8.6" y="18.4" width="0.8" height="2.8" fill="#ff0"/><rect x="11" y="18.4" width="0.8" height="2.8" fill="#ff0"/>
</svg>
<div class="abs tt" style="left:304.5px;top:488.85px">节能数据01</div>
<div class="abs" style="left:269px;top:528px;width:1px;height:1px;background:#5a5a5a"></div><div class="abs" style="left:269px;top:530px;width:1px;height:1px;background:#a0a0a0"></div><div class="abs" style="left:269px;top:533px;width:1px;height:1px;background:#5a5a5a"></div>
<div class="abs" style="left:269px;top:545px;width:1px;height:1px;background:#5a5a5a"></div><div class="abs" style="left:269px;top:547px;width:1px;height:1px;background:#a0a0a0"></div>
<div class="abs" style="left:275px;top:538px;width:1px;height:1px;background:#a0a0a0"></div><div class="abs" style="left:278px;top:538px;width:1px;height:1px;background:#5a5a5a"></div>
<svg class="abs" style="left:264.0px;top:533.0px" width="11" height="11" viewBox="0 0 11 11"><rect x="0.6" y="0.6" width="9.8" height="9.8" fill="#fff" stroke="#8c8c8c" stroke-width="1.2"/><path d="M2.5 5.5 H8.5" stroke="#000" stroke-width="1.5"/><path d="M5.5 2.5 V8.5" stroke="#000" stroke-width="1.5"/></svg>
<svg class="abs" style="left:277.8px;top:525.5px" width="26" height="26" viewBox="0 0 26 26">
<path d="M9.6 16.6 L9.6 14 L14.5 8.9 L21.3 9.6 L22.2 11.1 L16.6 16.8 Z" fill="#0af564" stroke="#000" stroke-width="1.6" stroke-linejoin="round"/>
<path d="M19 9 L20.5 7" stroke="#000" stroke-width="1.4"/>
<circle cx="19.6" cy="5.6" r="1.05" fill="#000"/><circle cx="21.7" cy="5.6" r="1.05" fill="#000"/>
<rect x="2.8" y="17.3" width="10.8" height="5" rx="0.9" fill="#000"/>
<rect x="4.2" y="18.4" width="8" height="1.5" fill="#22cc00"/>
<rect x="4.2" y="19.9" width="8" height="1.3" fill="#ee1111"/>
<rect x="5.6" y="18.4" width="0.8" height="2.8" fill="#ff0"/><rect x="8.6" y="18.4" width="0.8" height="2.8" fill="#ff0"/><rect x="11" y="18.4" width="0.8" height="2.8" fill="#ff0"/>
</svg>
<div class="abs tt" style="left:304.5px;top:525.10px">艾络科技</div>
<div class="abs" style="left:269px;top:564px;width:1px;height:1px;background:#5a5a5a"></div><div class="abs" style="left:269px;top:566px;width:1px;height:1px;background:#a0a0a0"></div><div class="abs" style="left:269px;top:569px;width:1px;height:1px;background:#5a5a5a"></div>
<div class="abs" style="left:269px;top:581px;width:1px;height:1px;background:#5a5a5a"></div><div class="abs" style="left:269px;top:583px;width:1px;height:1px;background:#a0a0a0"></div>
<div class="abs" style="left:275px;top:574px;width:1px;height:1px;background:#a0a0a0"></div><div class="abs" style="left:278px;top:574px;width:1px;height:1px;background:#5a5a5a"></div>
<svg class="abs" style="left:264.0px;top:569.5px" width="11" height="11" viewBox="0 0 11 11"><rect x="0.6" y="0.6" width="9.8" height="9.8" fill="#fff" stroke="#8c8c8c" stroke-width="1.2"/><path d="M2.5 5.5 H8.5" stroke="#000" stroke-width="1.5"/><path d="M5.5 2.5 V8.5" stroke="#000" stroke-width="1.5"/></svg>
<svg class="abs" style="left:277.8px;top:562.25px;transform:rotate(180deg)" width="26" height="26" viewBox="0 0 26 26">
<path d="M9.6 16.6 L9.6 14 L14.5 8.9 L21.3 9.6 L22.2 11.1 L16.6 16.8 Z" fill="#b8b8b8" stroke="#000" stroke-width="1.6" stroke-linejoin="round"/>
<path d="M19 9 L20.5 7" stroke="#000" stroke-width="1.4"/>
<circle cx="19.6" cy="5.6" r="1.05" fill="#000"/><circle cx="21.7" cy="5.6" r="1.05" fill="#000"/>
<rect x="2.8" y="17.3" width="10.8" height="5" rx="0.9" fill="#000"/>
<rect x="4.2" y="18.4" width="8" height="1.5" fill="#22cc00"/>
<rect x="4.2" y="19.9" width="8" height="1.3" fill="#ee1111"/>
<rect x="5.6" y="18.4" width="0.8" height="2.8" fill="#ff0"/><rect x="8.6" y="18.4" width="0.8" height="2.8" fill="#ff0"/><rect x="11" y="18.4" width="0.8" height="2.8" fill="#ff0"/>
</svg>
<div class="abs tt" style="left:304.5px;top:561.35px">精密大厦</div>
<div class="abs" style="left:269px;top:600px;width:1px;height:1px;background:#5a5a5a"></div><div class="abs" style="left:269px;top:603px;width:1px;height:1px;background:#a0a0a0"></div><div class="abs" style="left:269px;top:605px;width:1px;height:1px;background:#5a5a5a"></div>
<div class="abs" style="left:269px;top:617px;width:1px;height:1px;background:#5a5a5a"></div><div class="abs" style="left:269px;top:620px;width:1px;height:1px;background:#a0a0a0"></div>
<div class="abs" style="left:275px;top:611px;width:1px;height:1px;background:#a0a0a0"></div><div class="abs" style="left:278px;top:611px;width:1px;height:1px;background:#5a5a5a"></div>
<svg class="abs" style="left:264.0px;top:605.5px" width="11" height="11" viewBox="0 0 11 11"><rect x="0.6" y="0.6" width="9.8" height="9.8" fill="#fff" stroke="#8c8c8c" stroke-width="1.2"/><path d="M2.5 5.5 H8.5" stroke="#000" stroke-width="1.5"/><path d="M5.5 2.5 V8.5" stroke="#000" stroke-width="1.5"/></svg>
<svg class="abs" style="left:277.8px;top:598.5px;transform:rotate(180deg)" width="26" height="26" viewBox="0 0 26 26">
<path d="M9.6 16.6 L9.6 14 L14.5 8.9 L21.3 9.6 L22.2 11.1 L16.6 16.8 Z" fill="#b8b8b8" stroke="#000" stroke-width="1.6" stroke-linejoin="round"/>
<path d="M19 9 L20.5 7" stroke="#000" stroke-width="1.4"/>
<circle cx="19.6" cy="5.6" r="1.05" fill="#000"/><circle cx="21.7" cy="5.6" r="1.05" fill="#000"/>
<rect x="2.8" y="17.3" width="10.8" height="5" rx="0.9" fill="#000"/>
<rect x="4.2" y="18.4" width="8" height="1.5" fill="#22cc00"/>
<rect x="4.2" y="19.9" width="8" height="1.3" fill="#ee1111"/>
<rect x="5.6" y="18.4" width="0.8" height="2.8" fill="#ff0"/><rect x="8.6" y="18.4" width="0.8" height="2.8" fill="#ff0"/><rect x="11" y="18.4" width="0.8" height="2.8" fill="#ff0"/>
</svg>
<div class="abs tt" style="left:304.5px;top:597.60px">金川测试</div>
<div class="abs" style="left:269px;top:636px;width:1px;height:1px;background:#5a5a5a"></div><div class="abs" style="left:269px;top:639px;width:1px;height:1px;background:#a0a0a0"></div><div class="abs" style="left:269px;top:641px;width:1px;height:1px;background:#5a5a5a"></div>
<div class="abs" style="left:269px;top:653px;width:1px;height:1px;background:#5a5a5a"></div><div class="abs" style="left:269px;top:656px;width:1px;height:1px;background:#a0a0a0"></div>
<div class="abs" style="left:275px;top:647px;width:1px;height:1px;background:#a0a0a0"></div><div class="abs" style="left:278px;top:647px;width:1px;height:1px;background:#5a5a5a"></div>
<svg class="abs" style="left:264.0px;top:642.0px" width="11" height="11" viewBox="0 0 11 11"><rect x="0.6" y="0.6" width="9.8" height="9.8" fill="#fff" stroke="#8c8c8c" stroke-width="1.2"/><path d="M2.5 5.5 H8.5" stroke="#000" stroke-width="1.5"/><path d="M5.5 2.5 V8.5" stroke="#000" stroke-width="1.5"/></svg>
<svg class="abs" style="left:277.8px;top:634.75px;transform:rotate(180deg)" width="26" height="26" viewBox="0 0 26 26">
<path d="M9.6 16.6 L9.6 14 L14.5 8.9 L21.3 9.6 L22.2 11.1 L16.6 16.8 Z" fill="#b8b8b8" stroke="#000" stroke-width="1.6" stroke-linejoin="round"/>
<path d="M19 9 L20.5 7" stroke="#000" stroke-width="1.4"/>
<circle cx="19.6" cy="5.6" r="1.05" fill="#000"/><circle cx="21.7" cy="5.6" r="1.05" fill="#000"/>
<rect x="2.8" y="17.3" width="10.8" height="5" rx="0.9" fill="#000"/>
<rect x="4.2" y="18.4" width="8" height="1.5" fill="#22cc00"/>
<rect x="4.2" y="19.9" width="8" height="1.3" fill="#ee1111"/>
<rect x="5.6" y="18.4" width="0.8" height="2.8" fill="#ff0"/><rect x="8.6" y="18.4" width="0.8" height="2.8" fill="#ff0"/><rect x="11" y="18.4" width="0.8" height="2.8" fill="#ff0"/>
</svg>
<div class="abs tt" style="left:304.5px;top:633.85px">艾络光伏测试网关</div>
<div class="abs" style="left:269px;top:673px;width:1px;height:1px;background:#5a5a5a"></div><div class="abs" style="left:269px;top:675px;width:1px;height:1px;background:#a0a0a0"></div><div class="abs" style="left:269px;top:678px;width:1px;height:1px;background:#5a5a5a"></div>
<div class="abs" style="left:269px;top:690px;width:1px;height:1px;background:#5a5a5a"></div><div class="abs" style="left:269px;top:692px;width:1px;height:1px;background:#a0a0a0"></div>
<div class="abs" style="left:275px;top:683px;width:1px;height:1px;background:#a0a0a0"></div><div class="abs" style="left:278px;top:683px;width:1px;height:1px;background:#5a5a5a"></div>
<svg class="abs" style="left:264.0px;top:678.0px" width="11" height="11" viewBox="0 0 11 11"><rect x="0.6" y="0.6" width="9.8" height="9.8" fill="#fff" stroke="#8c8c8c" stroke-width="1.2"/><path d="M2.5 5.5 H8.5" stroke="#000" stroke-width="1.5"/><path d="M5.5 2.5 V8.5" stroke="#000" stroke-width="1.5"/></svg>
<svg class="abs" style="left:277.8px;top:671.0px;transform:rotate(180deg)" width="26" height="26" viewBox="0 0 26 26">
<path d="M9.6 16.6 L9.6 14 L14.5 8.9 L21.3 9.6 L22.2 11.1 L16.6 16.8 Z" fill="#b8b8b8" stroke="#000" stroke-width="1.6" stroke-linejoin="round"/>
<path d="M19 9 L20.5 7" stroke="#000" stroke-width="1.4"/>
<circle cx="19.6" cy="5.6" r="1.05" fill="#000"/><circle cx="21.7" cy="5.6" r="1.05" fill="#000"/>
<rect x="2.8" y="17.3" width="10.8" height="5" rx="0.9" fill="#000"/>
<rect x="4.2" y="18.4" width="8" height="1.5" fill="#22cc00"/>
<rect x="4.2" y="19.9" width="8" height="1.3" fill="#ee1111"/>
<rect x="5.6" y="18.4" width="0.8" height="2.8" fill="#ff0"/><rect x="8.6" y="18.4" width="0.8" height="2.8" fill="#ff0"/><rect x="11" y="18.4" width="0.8" height="2.8" fill="#ff0"/>
</svg>
<div class="abs tt" style="left:304.5px;top:670.10px">LJT温湿度计</div>
<div class="abs" style="left:269px;top:709px;width:1px;height:1px;background:#5a5a5a"></div><div class="abs" style="left:269px;top:711px;width:1px;height:1px;background:#a0a0a0"></div><div class="abs" style="left:269px;top:714px;width:1px;height:1px;background:#5a5a5a"></div>
<div class="abs" style="left:269px;top:726px;width:1px;height:1px;background:#5a5a5a"></div><div class="abs" style="left:269px;top:728px;width:1px;height:1px;background:#a0a0a0"></div>
<div class="abs" style="left:275px;top:719px;width:1px;height:1px;background:#a0a0a0"></div><div class="abs" style="left:278px;top:719px;width:1px;height:1px;background:#5a5a5a"></div>
<svg class="abs" style="left:264.0px;top:714.5px" width="11" height="11" viewBox="0 0 11 11"><rect x="0.6" y="0.6" width="9.8" height="9.8" fill="#fff" stroke="#8c8c8c" stroke-width="1.2"/><path d="M2.5 5.5 H8.5" stroke="#000" stroke-width="1.5"/><path d="M5.5 2.5 V8.5" stroke="#000" stroke-width="1.5"/></svg>
<svg class="abs" style="left:277.8px;top:707.25px;transform:rotate(180deg)" width="26" height="26" viewBox="0 0 26 26">
<path d="M9.6 16.6 L9.6 14 L14.5 8.9 L21.3 9.6 L22.2 11.1 L16.6 16.8 Z" fill="#b8b8b8" stroke="#000" stroke-width="1.6" stroke-linejoin="round"/>
<path d="M19 9 L20.5 7" stroke="#000" stroke-width="1.4"/>
<circle cx="19.6" cy="5.6" r="1.05" fill="#000"/><circle cx="21.7" cy="5.6" r="1.05" fill="#000"/>
<rect x="2.8" y="17.3" width="10.8" height="5" rx="0.9" fill="#000"/>
<rect x="4.2" y="18.4" width="8" height="1.5" fill="#22cc00"/>
<rect x="4.2" y="19.9" width="8" height="1.3" fill="#ee1111"/>
<rect x="5.6" y="18.4" width="0.8" height="2.8" fill="#ff0"/><rect x="8.6" y="18.4" width="0.8" height="2.8" fill="#ff0"/><rect x="11" y="18.4" width="0.8" height="2.8" fill="#ff0"/>
</svg>
<div class="abs tt" style="left:304.5px;top:706.35px">104test</div>
<div class="abs" style="left:269px;top:745px;width:1px;height:1px;background:#5a5a5a"></div><div class="abs" style="left:269px;top:748px;width:1px;height:1px;background:#a0a0a0"></div><div class="abs" style="left:269px;top:750px;width:1px;height:1px;background:#5a5a5a"></div>
<div class="abs" style="left:269px;top:762px;width:1px;height:1px;background:#5a5a5a"></div><div class="abs" style="left:269px;top:765px;width:1px;height:1px;background:#a0a0a0"></div>
<div class="abs" style="left:275px;top:756px;width:1px;height:1px;background:#a0a0a0"></div><div class="abs" style="left:278px;top:756px;width:1px;height:1px;background:#5a5a5a"></div>
<svg class="abs" style="left:264.0px;top:750.5px" width="11" height="11" viewBox="0 0 11 11"><rect x="0.6" y="0.6" width="9.8" height="9.8" fill="#fff" stroke="#8c8c8c" stroke-width="1.2"/><path d="M2.5 5.5 H8.5" stroke="#000" stroke-width="1.5"/><path d="M5.5 2.5 V8.5" stroke="#000" stroke-width="1.5"/></svg>
<svg class="abs" style="left:277.8px;top:743.5px;transform:rotate(180deg)" width="26" height="26" viewBox="0 0 26 26">
<path d="M9.6 16.6 L9.6 14 L14.5 8.9 L21.3 9.6 L22.2 11.1 L16.6 16.8 Z" fill="#b8b8b8" stroke="#000" stroke-width="1.6" stroke-linejoin="round"/>
<path d="M19 9 L20.5 7" stroke="#000" stroke-width="1.4"/>
<circle cx="19.6" cy="5.6" r="1.05" fill="#000"/><circle cx="21.7" cy="5.6" r="1.05" fill="#000"/>
<rect x="2.8" y="17.3" width="10.8" height="5" rx="0.9" fill="#000"/>
<rect x="4.2" y="18.4" width="8" height="1.5" fill="#22cc00"/>
<rect x="4.2" y="19.9" width="8" height="1.3" fill="#ee1111"/>
<rect x="5.6" y="18.4" width="0.8" height="2.8" fill="#ff0"/><rect x="8.6" y="18.4" width="0.8" height="2.8" fill="#ff0"/><rect x="11" y="18.4" width="0.8" height="2.8" fill="#ff0"/>
</svg>
<div class="abs tt" style="left:304.5px;top:742.60px">设备通讯测试通道</div>
<div class="abs" style="left:269px;top:781px;width:1px;height:1px;background:#5a5a5a"></div><div class="abs" style="left:269px;top:784px;width:1px;height:1px;background:#a0a0a0"></div><div class="abs" style="left:269px;top:786px;width:1px;height:1px;background:#5a5a5a"></div>
<div class="abs" style="left:269px;top:798px;width:1px;height:1px;background:#5a5a5a"></div><div class="abs" style="left:269px;top:801px;width:1px;height:1px;background:#a0a0a0"></div>
<div class="abs" style="left:275px;top:792px;width:1px;height:1px;background:#a0a0a0"></div><div class="abs" style="left:278px;top:792px;width:1px;height:1px;background:#5a5a5a"></div>
<svg class="abs" style="left:264.0px;top:787.0px" width="11" height="11" viewBox="0 0 11 11"><rect x="0.6" y="0.6" width="9.8" height="9.8" fill="#fff" stroke="#8c8c8c" stroke-width="1.2"/><path d="M2.5 5.5 H8.5" stroke="#000" stroke-width="1.5"/><path d="M5.5 2.5 V8.5" stroke="#000" stroke-width="1.5"/></svg>
<svg class="abs" style="left:277.8px;top:779.75px;transform:rotate(180deg)" width="26" height="26" viewBox="0 0 26 26">
<path d="M9.6 16.6 L9.6 14 L14.5 8.9 L21.3 9.6 L22.2 11.1 L16.6 16.8 Z" fill="#b8b8b8" stroke="#000" stroke-width="1.6" stroke-linejoin="round"/>
<path d="M19 9 L20.5 7" stroke="#000" stroke-width="1.4"/>
<circle cx="19.6" cy="5.6" r="1.05" fill="#000"/><circle cx="21.7" cy="5.6" r="1.05" fill="#000"/>
<rect x="2.8" y="17.3" width="10.8" height="5" rx="0.9" fill="#000"/>
<rect x="4.2" y="18.4" width="8" height="1.5" fill="#22cc00"/>
<rect x="4.2" y="19.9" width="8" height="1.3" fill="#ee1111"/>
<rect x="5.6" y="18.4" width="0.8" height="2.8" fill="#ff0"/><rect x="8.6" y="18.4" width="0.8" height="2.8" fill="#ff0"/><rect x="11" y="18.4" width="0.8" height="2.8" fill="#ff0"/>
</svg>
<div class="abs tt" style="left:304.5px;top:778.85px">信阳电厂2号网关</div>
<div class="abs" style="left:269px;top:818px;width:1px;height:1px;background:#5a5a5a"></div><div class="abs" style="left:269px;top:820px;width:1px;height:1px;background:#a0a0a0"></div><div class="abs" style="left:269px;top:823px;width:1px;height:1px;background:#5a5a5a"></div>
<div class="abs" style="left:269px;top:835px;width:1px;height:1px;background:#5a5a5a"></div><div class="abs" style="left:269px;top:837px;width:1px;height:1px;background:#a0a0a0"></div>
<div class="abs" style="left:275px;top:828px;width:1px;height:1px;background:#a0a0a0"></div><div class="abs" style="left:278px;top:828px;width:1px;height:1px;background:#5a5a5a"></div>
<svg class="abs" style="left:264.0px;top:823.0px" width="11" height="11" viewBox="0 0 11 11"><rect x="0.6" y="0.6" width="9.8" height="9.8" fill="#fff" stroke="#8c8c8c" stroke-width="1.2"/><path d="M2.5 5.5 H8.5" stroke="#000" stroke-width="1.5"/><path d="M5.5 2.5 V8.5" stroke="#000" stroke-width="1.5"/></svg>
<svg class="abs" style="left:277.8px;top:816.0px;transform:rotate(180deg)" width="26" height="26" viewBox="0 0 26 26">
<path d="M9.6 16.6 L9.6 14 L14.5 8.9 L21.3 9.6 L22.2 11.1 L16.6 16.8 Z" fill="#b8b8b8" stroke="#000" stroke-width="1.6" stroke-linejoin="round"/>
<path d="M19 9 L20.5 7" stroke="#000" stroke-width="1.4"/>
<circle cx="19.6" cy="5.6" r="1.05" fill="#000"/><circle cx="21.7" cy="5.6" r="1.05" fill="#000"/>
<rect x="2.8" y="17.3" width="10.8" height="5" rx="0.9" fill="#000"/>
<rect x="4.2" y="18.4" width="8" height="1.5" fill="#22cc00"/>
<rect x="4.2" y="19.9" width="8" height="1.3" fill="#ee1111"/>
<rect x="5.6" y="18.4" width="0.8" height="2.8" fill="#ff0"/><rect x="8.6" y="18.4" width="0.8" height="2.8" fill="#ff0"/><rect x="11" y="18.4" width="0.8" height="2.8" fill="#ff0"/>
</svg>
<div class="abs tt" style="left:304.5px;top:815.10px">信阳电厂1号网关</div>
<div class="abs" style="left:269px;top:854px;width:1px;height:1px;background:#5a5a5a"></div><div class="abs" style="left:269px;top:856px;width:1px;height:1px;background:#a0a0a0"></div><div class="abs" style="left:269px;top:859px;width:1px;height:1px;background:#5a5a5a"></div>
<div class="abs" style="left:275px;top:864px;width:1px;height:1px;background:#a0a0a0"></div><div class="abs" style="left:278px;top:864px;width:1px;height:1px;background:#5a5a5a"></div>
<svg class="abs" style="left:264.0px;top:859.5px" width="11" height="11" viewBox="0 0 11 11"><rect x="0.6" y="0.6" width="9.8" height="9.8" fill="#fff" stroke="#8c8c8c" stroke-width="1.2"/><path d="M2.5 5.5 H8.5" stroke="#000" stroke-width="1.5"/><path d="M5.5 2.5 V8.5" stroke="#000" stroke-width="1.5"/></svg>
<svg class="abs" style="left:281px;top:857.35px" width="21" height="17" viewBox="0 0 21 17">
<defs><linearGradient id="cf18" x1="0" y1="0" x2="0" y2="1"><stop offset="0" stop-color="#ffff9e"/><stop offset="1" stop-color="#fed46a"/></linearGradient></defs>
<path d="M1 3.2 Q1 1 3 1 H9 L10.8 2.8 H16.2 Q18 2.8 18 4.6 V14.3 Q18 15.6 16.6 15.6 H2.4 Q1 15.6 1 14.3 Z" fill="#f2cf6a" stroke="#d59b2a" stroke-width="1.4"/>
<rect x="2.3" y="4.6" width="14.4" height="9.8" fill="url(#cf18)"/>
<rect x="2.3" y="4.4" width="14.4" height="0.9" fill="#fffbe6"/>
<rect x="19.2" y="6.5" width="1.2" height="3.2" rx="0.6" fill="#e0a830"/>
</svg>
<div class="abs tt" style="left:304.5px;top:851.35px">首开福茂</div>
<svg class="abs" style="left:1669.5px;top:162px" width="15" height="15" viewBox="0 0 15 15"><path d="M7.5 0 V15 M0 7.5 H15" stroke="#2c94fe" stroke-width="1.3"/></svg>
<div class="abs" style="left:1692px;top:158.5px;font-size:17px;line-height:24px;color:#2c94fe;-webkit-text-stroke:0.3px #2c94fe;white-space:nowrap">新增</div>
<svg class="abs" style="left:1747px;top:162px" width="15" height="15" viewBox="0 0 15 15"><path d="M7.5 0 V15 M0 7.5 H15" stroke="#2c94fe" stroke-width="1.3"/></svg>
<div class="abs" style="left:1770px;top:158.5px;font-size:17px;line-height:24px;color:#2c94fe;-webkit-text-stroke:0.3px #2c94fe;white-space:nowrap">修改</div>
<svg class="abs" style="left:1825px;top:161.5px" width="15" height="16" viewBox="0 0 15 16"><path d="M0.5 3.2 H14.5" stroke="#2c94fe" stroke-width="1.3"/><path d="M4.5 3 V1 H10.5 V3" fill="none" stroke="#2c94fe" stroke-width="1.3"/><path d="M2.2 3.2 V15.3 H12.8 V3.2" fill="none" stroke="#2c94fe" stroke-width="1.3"/><path d="M5.8 6 V12.5 M9.2 6 V12.5" stroke="#2c94fe" stroke-width="1.2"/></svg>
<div class="abs" style="left:1848px;top:158.5px;font-size:17px;line-height:24px;color:#2c94fe;-webkit-text-stroke:0.3px #2c94fe;white-space:nowrap">删除</div>
<div class="abs" style="left:557px;top:237px;width:1351px;height:45px;background:#ebf3fd"></div>
<div class="abs" style="left:619px;top:193px;width:1px;height:89px;background:#e8edf3"></div>
<div class="abs" style="left:845px;top:193px;width:1px;height:89px;background:#e8edf3"></div>
<div class="abs" style="left:1157px;top:193px;width:1px;height:89px;background:#e8edf3"></div>
<div class="abs" style="left:1345px;top:193px;width:1px;height:89px;background:#e8edf3"></div>
<div class="abs" style="left:1532px;top:193px;width:1px;height:89px;background:#e8edf3"></div>
<div class="abs" style="left:1720px;top:193px;width:1px;height:89px;background:#e8edf3"></div>
<div class="abs" style="left:570px;top:248px;font-family:'Liberation Serif',serif;font-size:16.25px;line-height:24px;color:#3c3c3c;-webkit-text-stroke:0px;white-space:nowrap">1</div>
<div class="abs" style="left:632.5px;top:201.5px;font-size:14px;letter-spacing:1.1px;line-height:26px;font-weight:bold;-webkit-text-stroke:0.15px #8a8a8a;color:#8a8a8a;white-space:nowrap">分组名称</div>
<div class="abs" style="left:632px;top:248px;font-family:'Liberation Serif',serif;font-size:16.25px;line-height:24px;color:#3c3c3c;-webkit-text-stroke:0px;white-space:nowrap">1</div>
<div class="abs" style="left:858.5px;top:201.5px;font-size:14px;letter-spacing:1.1px;line-height:26px;font-weight:bold;-webkit-text-stroke:0.15px #8a8a8a;color:#8a8a8a;white-space:nowrap">分组编号</div>
<div class="abs" style="left:858px;top:248px;font-family:'Liberation Serif',serif;font-size:16.25px;line-height:24px;color:#3c3c3c;-webkit-text-stroke:0px;white-space:nowrap">1</div>
<div class="abs" style="left:1170.5px;top:201.5px;font-size:14px;letter-spacing:1.1px;line-height:26px;font-weight:bold;-webkit-text-stroke:0.15px #8a8a8a;color:#8a8a8a;white-space:nowrap">功能码</div>
<div class="abs" style="left:1170px;top:248px;font-family:'Liberation Serif',serif;font-size:16.25px;line-height:24px;color:#3c3c3c;-webkit-text-stroke:0px;white-space:nowrap">3</div>
<div class="abs" style="left:1358.5px;top:201.5px;font-size:14px;letter-spacing:1.1px;line-height:26px;font-weight:bold;-webkit-text-stroke:0.15px #8a8a8a;color:#8a8a8a;white-space:nowrap">起始寄存器地址</div>
<div class="abs" style="left:1358px;top:248px;font-family:'Liberation Serif',serif;font-size:16.25px;line-height:24px;color:#3c3c3c;-webkit-text-stroke:0px;white-space:nowrap">0</div>
<div class="abs" style="left:1545.5px;top:201.5px;font-size:14px;letter-spacing:1.1px;line-height:26px;font-weight:bold;-webkit-text-stroke:0.15px #8a8a8a;color:#8a8a8a;white-space:nowrap">读取寄存器数量</div>
<div class="abs" style="left:1545px;top:248px;font-family:'Liberation Serif',serif;font-size:16.25px;line-height:24px;color:#3c3c3c;-webkit-text-stroke:0px;white-space:nowrap">100</div>
<div class="abs" style="left:1733.5px;top:201.5px;font-size:14px;letter-spacing:1.1px;line-height:26px;font-weight:bold;-webkit-text-stroke:0.15px #8a8a8a;color:#8a8a8a;white-space:nowrap">倍率</div>
<div class="abs" style="left:1733px;top:248px;font-family:'Liberation Serif',serif;font-size:16.25px;line-height:24px;color:#3c3c3c;-webkit-text-stroke:0px;white-space:nowrap">1</div>
<div class="abs" style="left:556px;top:503px;width:1352px;height:1px;background:#e6eef6"></div>
<div class="abs" style="left:563px;top:593px;font-size:17.5px;line-height:28px;color:#2c94fe;white-space:nowrap">数据项信息</div>
<div class="abs" style="left:556px;top:628px;width:1352px;height:1px;background:#e8e8e8"></div>
<div class="abs" style="left:562px;top:627px;width:88px;height:2px;background:#2c94fe"></div>
<svg class="abs" style="left:1634px;top:599px" width="15" height="15" viewBox="0 0 15 15"><path d="M7.5 0 V15 M0 7.5 H15" stroke="#2c94fe" stroke-width="1.3"/></svg>
<div class="abs" style="left:1656px;top:595.5px;font-size:17px;line-height:24px;color:#2c94fe;-webkit-text-stroke:0.3px #2c94fe;white-space:nowrap">新增一行</div>
<svg class="abs" style="left:1747px;top:599px" width="15" height="15" viewBox="0 0 15 15"><path d="M7.5 0 V15 M0 7.5 H15" stroke="#2c94fe" stroke-width="1.3"/></svg>
<div class="abs" style="left:1770px;top:595.5px;font-size:17px;line-height:24px;color:#2c94fe;-webkit-text-stroke:0.3px #2c94fe;white-space:nowrap">保存</div>
<svg class="abs" style="left:1825px;top:598.5px" width="15" height="16" viewBox="0 0 15 16"><path d="M0.5 3.2 H14.5" stroke="#2c94fe" stroke-width="1.3"/><path d="M4.5 3 V1 H10.5 V3" fill="none" stroke="#2c94fe" stroke-width="1.3"/><path d="M2.2 3.2 V15.3 H12.8 V3.2" fill="none" stroke="#2c94fe" stroke-width="1.3"/><path d="M5.8 6 V12.5 M9.2 6 V12.5" stroke="#2c94fe" stroke-width="1.2"/></svg>
<div class="abs" style="left:1848px;top:595.5px;font-size:17px;line-height:24px;color:#2c94fe;-webkit-text-stroke:0.3px #2c94fe;white-space:nowrap">清空</div>
<div class="abs" style="left:557.5px;top:630.5px;width:1313.5px;height:35.75px;background:#f2f2f2"></div>
<div class="abs" style="left:557.5px;top:630.5px;width:62.5px;height:291.75px;background:#f2f2f2"></div>
<div class="abs" style="left:557.5px;top:630.00px;width:1313.5px;height:1px;background:#d0d0d0"></div>
<div class="abs" style="left:557.5px;top:665.75px;width:1313.5px;height:1px;background:#d0d0d0"></div>
<div class="abs" style="left:557.5px;top:697.75px;width:1313.5px;height:1px;background:#d0d0d0"></div>
<div class="abs" style="left:557.5px;top:729.75px;width:1313.5px;height:1px;background:#d0d0d0"></div>
<div class="abs" style="left:557.5px;top:761.75px;width:1313.5px;height:1px;background:#d0d0d0"></div>
<div class="abs" style="left:557.5px;top:793.75px;width:1313.5px;height:1px;background:#d0d0d0"></div>
<div class="abs" style="left:557.5px;top:825.75px;width:1313.5px;height:1px;background:#d0d0d0"></div>
<div class="abs" style="left:557.5px;top:857.75px;width:1313.5px;height:1px;background:#d0d0d0"></div>
<div class="abs" style="left:557.5px;top:889.75px;width:1313.5px;height:1px;background:#d0d0d0"></div>
<div class="abs" style="left:557.5px;top:921.75px;width:1313.5px;height:1px;background:#d0d0d0"></div>
<div class="abs" style="left:557.00px;top:630.0px;width:1px;height:292.25px;background:#d0d0d0"></div>
<div class="abs" style="left:619.50px;top:630.0px;width:1px;height:292.25px;background:#d0d0d0"></div>
<div class="abs" style="left:798.20px;top:630.0px;width:1px;height:292.25px;background:#d0d0d0"></div>
<div class="abs" style="left:976.90px;top:630.0px;width:1px;height:292.25px;background:#d0d0d0"></div>
<div class="abs" style="left:1155.60px;top:630.0px;width:1px;height:292.25px;background:#d0d0d0"></div>
<div class="abs" style="left:1334.30px;top:630.0px;width:1px;height:292.25px;background:#d0d0d0"></div>
<div class="abs" style="left:1513.00px;top:630.0px;width:1px;height:292.25px;background:#d0d0d0"></div>
<div class="abs" style="left:1691.70px;top:630.0px;width:1px;height:292.25px;background:#d0d0d0"></div>
<div class="abs" style="left:1870.50px;top:630.0px;width:1px;height:292.25px;background:#d0d0d0"></div>
<div class="abs" style="left:620px;top:634.5px;width:178.70000000000005px;text-align:center;font-size:20px;line-height:30px;color:#000;white-space:nowrap">数据项英文名称</div>
<div class="abs" style="left:798.7px;top:634.5px;width:178.69999999999993px;text-align:center;font-size:20px;line-height:30px;color:#000;white-space:nowrap">数据项中文名称</div>
<div class="abs" style="left:977.4px;top:634.5px;width:178.69999999999993px;text-align:center;font-size:20px;line-height:30px;color:#000;white-space:nowrap">数据类型</div>
<div class="abs" style="left:1156.1px;top:634.5px;width:178.70000000000005px;text-align:center;font-size:20px;line-height:30px;color:#000;white-space:nowrap">功能码</div>
<div class="abs" style="left:1334.8px;top:634.5px;width:178.70000000000005px;text-align:center;font-size:20px;line-height:30px;color:#000;white-space:nowrap">起始寄存器地址</div>
<div class="abs" style="left:1513.5px;top:634.5px;width:178.70000000000005px;text-align:center;font-size:20px;line-height:30px;color:#000;white-space:nowrap">读取寄存器数量</div>
<div class="abs" style="left:1692.2px;top:634.5px;width:178.79999999999995px;text-align:center;font-size:20px;line-height:30px;color:#000;white-space:nowrap">倍率</div>
<div class="abs" style="left:557.5px;top:667.25px;width:62.5px;text-align:center;font-size:20px;line-height:30px;color:#000;white-space:nowrap">1</div>
<div class="abs" style="left:620px;top:667.25px;width:178.70000000000005px;text-align:center;font-size:20px;line-height:30px;color:#000;white-space:nowrap">PW</div>
<div class="abs" style="left:798.7px;top:667.25px;width:178.69999999999993px;text-align:center;font-size:20px;line-height:30px;color:#000;white-space:nowrap">密码</div>
<div class="abs" style="left:977.4px;top:667.25px;width:178.69999999999993px;text-align:center;font-size:20px;line-height:30px;color:#000;white-space:nowrap">UINT</div>
<div class="abs" style="left:1156.1px;top:667.25px;width:178.70000000000005px;text-align:center;font-size:20px;line-height:30px;color:#000;white-space:nowrap">3</div>
<div class="abs" style="left:1334.8px;top:667.25px;width:178.70000000000005px;text-align:center;font-size:20px;line-height:30px;color:#000;white-space:nowrap">4096</div>
<div class="abs" style="left:1513.5px;top:667.25px;width:178.70000000000005px;text-align:center;font-size:20px;line-height:30px;color:#000;white-space:nowrap">1</div>
<div class="abs" style="left:1692.2px;top:667.25px;width:178.79999999999995px;text-align:center;font-size:20px;line-height:30px;color:#000;white-space:nowrap">1</div>
<svg class="abs" style="left:1128px;top:679.25px" width="12" height="7" viewBox="0 0 12 7"><path d="M0 0 H12 L6 6.5 Z" fill="#c8c8c8"/></svg>
<div class="abs" style="left:557.5px;top:699.25px;width:62.5px;text-align:center;font-size:20px;line-height:30px;color:#000;white-space:nowrap">2</div>
<div class="abs" style="left:620px;top:699.25px;width:178.70000000000005px;text-align:center;font-size:20px;line-height:30px;color:#000;white-space:nowrap">ADD_0</div>
<div class="abs" style="left:798.7px;top:699.25px;width:178.69999999999993px;text-align:center;font-size:20px;line-height:30px;color:#000;white-space:nowrap">地址</div>
<div class="abs" style="left:977.4px;top:699.25px;width:178.69999999999993px;text-align:center;font-size:20px;line-height:30px;color:#000;white-space:nowrap">UINT</div>
<div class="abs" style="left:1156.1px;top:699.25px;width:178.70000000000005px;text-align:center;font-size:20px;line-height:30px;color:#000;white-space:nowrap">3</div>
<div class="abs" style="left:1334.8px;top:699.25px;width:178.70000000000005px;text-align:center;font-size:20px;line-height:30px;color:#000;white-space:nowrap">4097</div>
<div class="abs" style="left:1513.5px;top:699.25px;width:178.70000000000005px;text-align:center;font-size:20px;line-height:30px;color:#000;white-space:nowrap">1</div>
<div class="abs" style="left:1692.2px;top:699.25px;width:178.79999999999995px;text-align:center;font-size:20px;line-height:30px;color:#000;white-space:nowrap">1</div>
<svg class="abs" style="left:1128px;top:711.25px" width="12" height="7" viewBox="0 0 12 7"><path d="M0 0 H12 L6 6.5 Z" fill="#c8c8c8"/></svg>
<div class="abs" style="left:557.5px;top:731.25px;width:62.5px;text-align:center;font-size:20px;line-height:30px;color:#000;white-space:nowrap">3</div>
<div class="abs" style="left:620px;top:731.25px;width:178.70000000000005px;text-align:center;font-size:20px;line-height:30px;color:#000;white-space:nowrap">bude</div>
<div class="abs" style="left:798.7px;top:731.25px;width:178.69999999999993px;text-align:center;font-size:20px;line-height:30px;color:#000;white-space:nowrap">波特率</div>
<div class="abs" style="left:977.4px;top:731.25px;width:178.69999999999993px;text-align:center;font-size:20px;line-height:30px;color:#000;white-space:nowrap">UINT</div>
<div class="abs" style="left:1156.1px;top:731.25px;width:178.70000000000005px;text-align:center;font-size:20px;line-height:30px;color:#000;white-space:nowrap">3</div>
<div class="abs" style="left:1334.8px;top:731.25px;width:178.70000000000005px;text-align:center;font-size:20px;line-height:30px;color:#000;white-space:nowrap">4098</div>
<div class="abs" style="left:1513.5px;top:731.25px;width:178.70000000000005px;text-align:center;font-size:20px;line-height:30px;color:#000;white-space:nowrap">1</div>
<div class="abs" style="left:1692.2px;top:731.25px;width:178.79999999999995px;text-align:center;font-size:20px;line-height:30px;color:#000;white-space:nowrap">1</div>
<svg class="abs" style="left:1128px;top:743.25px" width="12" height="7" viewBox="0 0 12 7"><path d="M0 0 H12 L6 6.5 Z" fill="#c8c8c8"/></svg>
<div class="abs" style="left:557.5px;top:763.25px;width:62.5px;text-align:center;font-size:20px;line-height:30px;color:#000;white-space:nowrap">4</div>
<div class="abs" style="left:620px;top:763.25px;width:178.70000000000005px;text-align:center;font-size:20px;line-height:30px;color:#000;white-space:nowrap">PT1</div>
<div class="abs" style="left:798.7px;top:763.25px;width:178.69999999999993px;text-align:center;font-size:20px;line-height:30px;color:#000;white-space:nowrap">PT1</div>
<div class="abs" style="left:977.4px;top:763.25px;width:178.69999999999993px;text-align:center;font-size:20px;line-height:30px;color:#000;white-space:nowrap">UINT</div>
<div class="abs" style="left:1156.1px;top:763.25px;width:178.70000000000005px;text-align:center;font-size:20px;line-height:30px;color:#000;white-space:nowrap">3</div>
<div class="abs" style="left:1334.8px;top:763.25px;width:178.70000000000005px;text-align:center;font-size:20px;line-height:30px;color:#000;white-space:nowrap">4101</div>
<div class="abs" style="left:1513.5px;top:763.25px;width:178.70000000000005px;text-align:center;font-size:20px;line-height:30px;color:#000;white-space:nowrap">1</div>
<div class="abs" style="left:1692.2px;top:763.25px;width:178.79999999999995px;text-align:center;font-size:20px;line-height:30px;color:#000;white-space:nowrap">1</div>
<svg class="abs" style="left:1128px;top:775.25px" width="12" height="7" viewBox="0 0 12 7"><path d="M0 0 H12 L6 6.5 Z" fill="#c8c8c8"/></svg>
<div class="abs" style="left:557.5px;top:795.25px;width:62.5px;text-align:center;font-size:20px;line-height:30px;color:#000;white-space:nowrap">5</div>
<div class="abs" style="left:620px;top:795.25px;width:178.70000000000005px;text-align:center;font-size:20px;line-height:30px;color:#000;white-space:nowrap">PT2</div>
<div class="abs" style="left:798.7px;top:795.25px;width:178.69999999999993px;text-align:center;font-size:20px;line-height:30px;color:#000;white-space:nowrap">PT2</div>
<div class="abs" style="left:977.4px;top:795.25px;width:178.69999999999993px;text-align:center;font-size:20px;line-height:30px;color:#000;white-space:nowrap">UINT</div>
<div class="abs" style="left:1156.1px;top:795.25px;width:178.70000000000005px;text-align:center;font-size:20px;line-height:30px;color:#000;white-space:nowrap">3</div>
<div class="abs" style="left:1334.8px;top:795.25px;width:178.70000000000005px;text-align:center;font-size:20px;line-height:30px;color:#000;white-space:nowrap">4103</div>
<div class="abs" style="left:1513.5px;top:795.25px;width:178.70000000000005px;text-align:center;font-size:20px;line-height:30px;color:#000;white-space:nowrap">1</div>
<div class="abs" style="left:1692.2px;top:795.25px;width:178.79999999999995px;text-align:center;font-size:20px;line-height:30px;color:#000;white-space:nowrap">1</div>
<svg class="abs" style="left:1128px;top:807.25px" width="12" height="7" viewBox="0 0 12 7"><path d="M0 0 H12 L6 6.5 Z" fill="#c8c8c8"/></svg>
<div class="abs" style="left:557.5px;top:827.25px;width:62.5px;text-align:center;font-size:20px;line-height:30px;color:#000;white-space:nowrap">6</div>
<div class="abs" style="left:620px;top:827.25px;width:178.70000000000005px;text-align:center;font-size:20px;line-height:30px;color:#000;white-space:nowrap">CT1</div>
<div class="abs" style="left:798.7px;top:827.25px;width:178.69999999999993px;text-align:center;font-size:20px;line-height:30px;color:#000;white-space:nowrap">CT1</div>
<div class="abs" style="left:977.4px;top:827.25px;width:178.69999999999993px;text-align:center;font-size:20px;line-height:30px;color:#000;white-space:nowrap">UINT</div>
<div class="abs" style="left:1156.1px;top:827.25px;width:178.70000000000005px;text-align:center;font-size:20px;line-height:30px;color:#000;white-space:nowrap">3</div>
<div class="abs" style="left:1334.8px;top:827.25px;width:178.70000000000005px;text-align:center;font-size:20px;line-height:30px;color:#000;white-space:nowrap">4104</div>
<div class="abs" style="left:1513.5px;top:827.25px;width:178.70000000000005px;text-align:center;font-size:20px;line-height:30px;color:#000;white-space:nowrap">1</div>
<div class="abs" style="left:1692.2px;top:827.25px;width:178.79999999999995px;text-align:center;font-size:20px;line-height:30px;color:#000;white-space:nowrap">1</div>
<svg class="abs" style="left:1128px;top:839.25px" width="12" height="7" viewBox="0 0 12 7"><path d="M0 0 H12 L6 6.5 Z" fill="#c8c8c8"/></svg>
<div class="abs" style="left:557.5px;top:859.25px;width:62.5px;text-align:center;font-size:20px;line-height:30px;color:#000;white-space:nowrap">7</div>
<div class="abs" style="left:620px;top:859.25px;width:178.70000000000005px;text-align:center;font-size:20px;line-height:30px;color:#000;white-space:nowrap">F</div>
<div class="abs" style="left:798.7px;top:859.25px;width:178.69999999999993px;text-align:center;font-size:20px;line-height:30px;color:#000;white-space:nowrap">频率</div>
<div class="abs" style="left:977.4px;top:859.25px;width:178.69999999999993px;text-align:center;font-size:20px;line-height:30px;color:#000;white-space:nowrap">FLOAT</div>
<div class="abs" style="left:1156.1px;top:859.25px;width:178.70000000000005px;text-align:center;font-size:20px;line-height:30px;color:#000;white-space:nowrap">3</div>
<div class="abs" style="left:1334.8px;top:859.25px;width:178.70000000000005px;text-align:center;font-size:20px;line-height:30px;color:#000;white-space:nowrap">16384</div>
<div class="abs" style="left:1513.5px;top:859.25px;width:178.70000000000005px;text-align:center;font-size:20px;line-height:30px;color:#000;white-space:nowrap">2</div>
<div class="abs" style="left:1692.2px;top:859.25px;width:178.79999999999995px;text-align:center;font-size:20px;line-height:30px;color:#000;white-space:nowrap">1</div>
<svg class="abs" style="left:1128px;top:871.25px" width="12" height="7" viewBox="0 0 12 7"><path d="M0 0 H12 L6 6.5 Z" fill="#c8c8c8"/></svg>
<div class="abs" style="left:557.5px;top:891.25px;width:62.5px;text-align:center;font-size:20px;line-height:30px;color:#000;white-space:nowrap">8</div>
<div class="abs" style="left:620px;top:891.25px;width:178.70000000000005px;text-align:center;font-size:20px;line-height:30px;color:#000;white-space:nowrap">V1</div>
<div class="abs" style="left:798.7px;top:891.25px;width:178.69999999999993px;text-align:center;font-size:20px;line-height:30px;color:#000;white-space:nowrap">V1</div>
<div class="abs" style="left:977.4px;top:891.25px;width:178.69999999999993px;text-align:center;font-size:20px;line-height:30px;color:#000;white-space:nowrap">FLOAT</div>
<div class="abs" style="left:1156.1px;top:891.25px;width:178.70000000000005px;text-align:center;font-size:20px;line-height:30px;color:#000;white-space:nowrap">3</div>
<div class="abs" style="left:1334.8px;top:891.25px;width:178.70000000000005px;text-align:center;font-size:20px;line-height:30px;color:#000;white-space:nowrap">16386</div>
<div class="abs" style="left:1513.5px;top:891.25px;width:178.70000000000005px;text-align:center;font-size:20px;line-height:30px;color:#000;white-space:nowrap">2</div>
<div class="abs" style="left:1692.2px;top:891.25px;width:178.79999999999995px;text-align:center;font-size:20px;line-height:30px;color:#000;white-space:nowrap">1</div>
<svg class="abs" style="left:1128px;top:903.25px" width="12" height="7" viewBox="0 0 12 7"><path d="M0 0 H12 L6 6.5 Z" fill="#c8c8c8"/></svg>
<div class="abs" style="left:1898px;top:631px;width:8px;height:293px;background:#9a9a9a;border-radius:4px 4px 0 0"></div>
<div class="abs" style="left:1908px;top:146px;width:1px;height:778px;background:#f0eded"></div>
<svg class="abs" style="left:1860px;top:1020px" width="60" height="60" viewBox="0 0 60 60">
<defs><linearGradient id="bg1" x1="0" y1="0" x2="1" y2="1"><stop offset="0" stop-color="#7fd0df"/><stop offset="0.35" stop-color="#80c4e0"/><stop offset="0.65" stop-color="#b2abe6"/><stop offset="1" stop-color="#f0a2c0"/></linearGradient></defs>
<circle cx="36" cy="37.3" r="27" fill="#fff" stroke="url(#bg1)" stroke-width="5"/>
<g stroke="#000" stroke-width="4.6" stroke-linecap="round" fill="none">
<path d="M25.3 26.8 L32.2 30.3"/>
<path d="M35.8 32 L47.2 26.6"/>
<path d="M21.6 34.2 L30.6 39.6"/>
<path d="M31.4 45.3 V52.5"/>
<path d="M40.3 41.5 V52.5"/>
<path d="M45.6 36.5 L50.6 33.6"/>
</g>
</svg>

</body>
</html>
